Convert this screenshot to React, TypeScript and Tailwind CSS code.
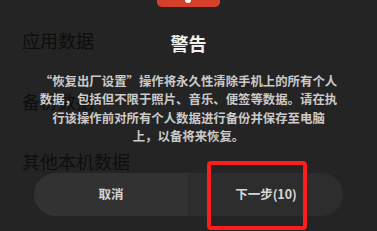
import React from 'react';

const font = { fontFamily: '"Noto Sans CJK SC", "Noto Sans", sans-serif' };

const App: React.FC = () => {
  return (
    <div className="relative w-[377px] h-[231px] overflow-hidden bg-[#242424]" style={font}>
      {/* settings list behind the dialog */}
      <div className="flex flex-col pl-[22px] pt-[27px] text-[18px] leading-[26px] text-[#0e0e0e]">
        <div>应用数据</div>
        <div className="mt-[35px]">备份数据</div>
        <div className="mt-[34px]">其他本机数据</div>
      </div>

      {/* dialog */}
      <div className="absolute inset-0 flex flex-col items-center">
        <div className="relative w-[63px] h-[7px] ml-[-1px] rounded-b-[5px] bg-[#d6402a]">
          <div className="absolute left-[28px] top-[-3px] w-[6px] h-[6px] rounded-full bg-white" />
        </div>
        <div className="mt-[23px] text-[18px] leading-[26px] font-bold text-[#f0f0f0]">警告</div>
        <p className="mt-[16px] text-center text-[12.4px] leading-[18.3px] font-bold text-[#cacaca]">
          “恢复出厂设置”操作将永久性清除手机上的所有个人
          <br />
          数据，包括但不限于照片、音乐、便签等数据。请在执
          <br />
          行该操作前对所有个人数据进行备份并保存至电脑
          <br />
          上，以备将来恢复。
        </p>
        <div className="mt-[28px] flex w-[309px] h-[43px] rounded-full overflow-hidden">
          <div className="flex-1 flex items-center justify-center bg-[#323232] text-[12.5px] font-bold text-[#d6d6d6]">
            取消
          </div>
          <div className="w-px bg-[#2a2a2a]" />
          <div className="flex-1 flex items-center justify-center bg-[#2d2d2d] text-[12.5px] font-bold text-[#d6d6d6]">
            下一步(10)
          </div>
        </div>
      </div>

      {/* annotation */}
      <div className="absolute left-[207px] top-[161px] w-[100px] h-[69px] rounded-[4px] border-[4px] border-[#ff1c1c]" />
    </div>
  );
};

export default App;
